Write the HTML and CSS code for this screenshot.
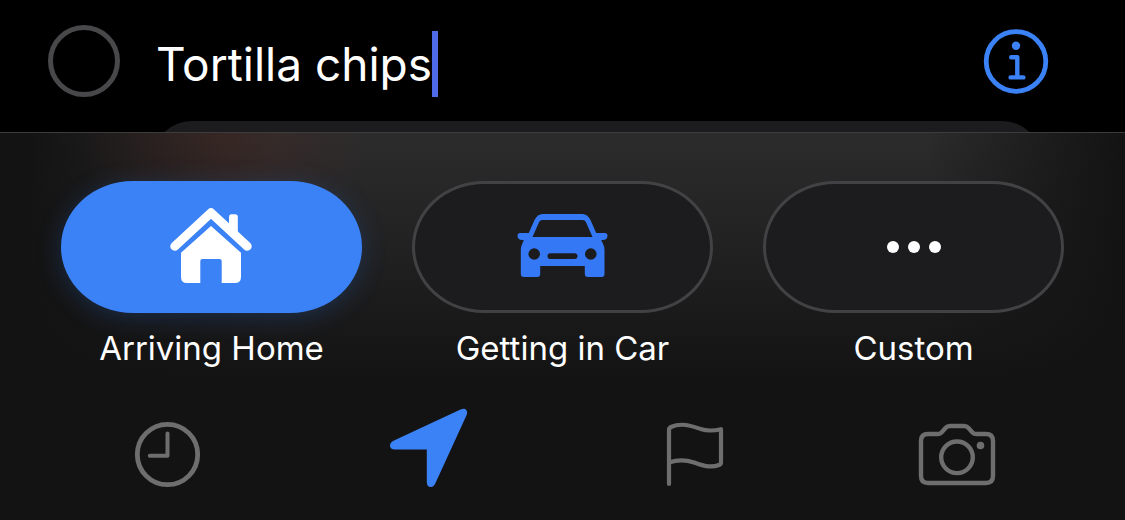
FILE: index.html
```html
<!DOCTYPE html>
<html lang="en">
<head>
    <meta charset="UTF-8">
    <meta name="viewport" content="width=device-width, initial-scale=1.0">
    <title>Reminders</title>
    <link rel="stylesheet" href="styles.css">
</head>
<body>
    <main class="reminder">
        <div class="reminder-row">
            <input type="checkbox" class="complete" aria-label="Mark as completed">
            <div class="title-field">
                <input type="text" class="title" value="Tortilla chips" size="10" aria-label="Title">
                <span class="caret"></span>
            </div>
            <button class="info" aria-label="Details">
                <svg width="66" height="66" viewBox="0 0 66 66" fill="none" stroke="currentColor" stroke-width="4.4" stroke-linecap="round" stroke-linejoin="round">
                    <circle cx="33" cy="33.5" r="29.8" stroke-width="4.8"/>
                    <circle cx="33" cy="17.7" r="4.2" fill="currentColor" stroke="none"/>
                    <path d="M28.2 29.2h6.1v20.2M27.6 49.4h12.8"/>
                </svg>
            </button>
        </div>
        <div class="card-peek"><div class="card"></div></div>
    </main>

    <section class="toolbar">
        <div class="locations">
            <button class="location selected" aria-pressed="true">
                <span class="pill">
                    <svg width="84" height="80" viewBox="0 0 84 80" fill="currentColor">
                        <path d="M4.8 39.3L41 5.8l36.2 33.5" fill="none" stroke="currentColor" stroke-width="9" stroke-linecap="round" stroke-linejoin="round"/>
                        <path d="M59 20V10q0-2.700 2.700-2.700h3.400q2.700 0 2.700 2.700v20z"/>
                        <path d="M41 19l30 26.700V70q0 6-6 6H51.700V54q0-2-2-2H32.300q-2 0-2 2v22H17q-6 0-6-6V45.700z"/>
                    </svg>
                </span>
                <span class="label">Arriving Home</span>
            </button>
            <button class="location" aria-pressed="false">
                <span class="pill">
                    <svg width="92" height="80" viewBox="0 0 92 80" fill="currentColor" fill-rule="evenodd">
                        <path d="M11.800 26L17.500 13Q20.500 7 25.500 7h40q5 0 8 6l5.700 13h8.600q2.700 0 2.700 2.500 0 4.500-5 4.500h-1.300l2.200 4.800q1.100 2.200 1.100 5V67q0 3-3 3H70.800q-3 0-3-3v-8H23.200v8q0 3-3 3H6.800q-3 0-3-3V42.800q0-2.800 1.100-5L6.800 33H5.500q-5 0-5-4.500Q.5 26 3.200 26zM15.500 30h60L69 15.300Q68 13 65.800 13H25.200Q23 13 22 15.300zM17.200 41.200a5.800 5.800 0 1 0 0 11.600a5.800 5.800 0 1 0 0-11.600zM73.800 41.200a5.800 5.800 0 1 0 0 11.600a5.800 5.800 0 1 0 0-11.600zM33.400 46.200a2.900 2.900 0 0 0 0 5.800h24.200a2.900 2.900 0 0 0 0-5.800z"/>
                    </svg>
                </span>
                <span class="label">Getting in Car</span>
            </button>
            <button class="location custom" aria-pressed="false">
                <span class="pill">
                    <svg width="54" height="12" viewBox="0 0 54 12" fill="currentColor">
                        <circle cx="6" cy="6" r="6"/>
                        <circle cx="27" cy="6" r="6"/>
                        <circle cx="48" cy="6" r="6"/>
                    </svg>
                </span>
                <span class="label">Custom</span>
            </button>
        </div>

        <nav class="actions">
            <button aria-label="Date and time">
                <svg width="84" height="80" viewBox="0 0 84 80" fill="none" stroke="currentColor" stroke-width="4" stroke-linecap="round">
                    <circle cx="41.500" cy="46.500" r="30.200" stroke-width="4.800"/>
                    <path d="M41.500 25.500v22.300H23.800" stroke-linejoin="round"/>
                </svg>
            </button>
            <button class="active" aria-label="Location">
                <svg width="84" height="80" viewBox="0 0 84 80" fill="currentColor">
                    <path d="M71.500 1.500Q75.500-.2 77.300 2 78.900 4 77.400 7.500L46.500 75Q44.800 79 41.800 79 37.800 79 37.800 74V41.500H6Q1 41.500 1 37.500 1 34.600 5 32.500z"/>
                </svg>
            </button>
            <button aria-label="Flag">
                <svg width="84" height="80" viewBox="0 0 84 80" fill="none" stroke="currentColor" stroke-width="4.200" stroke-linecap="round" stroke-linejoin="round">
                    <path d="M17 76V22q0-2 2-3c11-5 22-.5 29.500 2 8 2.500 13 2 20.500.2v33.300q0 1.700-2 2.500c-9 3.500-18 0-25-2.500-9-3-16-3-25 0"/>
                </svg>
            </button>
            <button aria-label="Camera">
                <svg width="84" height="80" viewBox="0 0 84 80" fill="none" stroke="currentColor" stroke-width="4.400">
                    <path d="M13 26h9.500q2.500 0 4-1.600l4-4.400q1.800-2 4.500-2h14q2.700 0 4.500 2l4 4.400q1.500 1.600 4 1.600h9.500q7 0 7 7v35q0 7-7 7h-58q-7 0-7-7V33q0-7 7-7z"/>
                    <circle cx="42" cy="49.300" r="15.800"/>
                    <circle cx="65.500" cy="37.500" r="3.800" fill="currentColor" stroke="none"/>
                </svg>
            </button>
        </nav>
    </section>
</body>
</html>
```

FILE: styles.css
```css
* {
    box-sizing: border-box;
}
body {
    margin: 0;
    min-height: 100vh;
    display: flex;
    flex-direction: column;
    background-color: #000;
    color: #fff;
    font-family: Inter, "Liberation Sans", sans-serif;
}
button {
    padding: 0;
    border: none;
    background: none;
    color: inherit;
    font: inherit;
    cursor: pointer;
}
svg {
    display: block;
}
.reminder-row {
    display: flex;
    align-items: center;
    padding: 25px 76px 24px 48px;
}
.complete {
    appearance: none;
    flex: none;
    width: 72px;
    height: 72px;
    margin: 0 36px 0 0;
    border: 5px solid #48484a;
    border-radius: 50%;
}
.complete:checked {
    background-color: #3b82f6;
}
.title-field {
    flex: 1;
    display: flex;
    align-items: center;
    padding-top: 6px;
}
.title {
    field-sizing: content;
    padding: 0;
    border: none;
    outline: none;
    background: none;
    color: #fff;
    font-family: inherit;
    font-size: 46px;
    line-height: 66px;
    caret-color: transparent;
}
.caret {
    width: 6px;
    height: 66px;
    background-color: #4f6be8;
}
.info {
    color: #3b82f6;
}

/* top of the next card, showing above the toolbar */
.card-peek {
    height: 11px;
    padding: 0 83px 0 152px;
    overflow: hidden;
}
.card {
    height: 100px;
    border-radius: 40px;
    background-color: #1c1c1e;
}

.toolbar {
    flex: 1;
    padding-top: 48px;
    border-top: 1px solid #3c3c3d;
    background:
        radial-gradient(150px 120px at 20% 0, rgba(84, 38, 28, 0.35), transparent),
        linear-gradient(to right, #131313 2%, transparent 24%, transparent 82%, #131313 100%),
        linear-gradient(#2c2c2d, #222223 28%, #131313 64%);
}
.locations {
    display: grid;
    grid-template-columns: repeat(3, 1fr);
    gap: 50px;
    padding: 0 61px;
}
.location {
    display: flex;
    flex-direction: column;
    gap: 15px;
}
.pill {
    display: flex;
    align-items: center;
    justify-content: center;
    width: 100%;
    height: 132px;
    border: 3px solid #424245;
    border-radius: 72px / 66px;
    background-color: #1c1c1e;
    color: #3478f6;
}
.selected .pill {
    border-color: #3b82f6;
    background-color: #3b82f6;
    color: #fff;
    box-shadow: 0 4px 24px rgba(40, 110, 220, 0.25);
}
.custom .pill {
    color: #fff;
}
.label {
    width: 100%;
    font-size: 33px;
    line-height: 40px;
    text-align: center;
}
.actions {
    display: grid;
    grid-template-columns: repeat(4, 1fr);
    padding: 40px 36px 32px;
    color: #6e6e6e;
}
.actions button {
    display: flex;
    justify-content: center;
}
.actions .active {
    color: #3b82f6;
}
```
